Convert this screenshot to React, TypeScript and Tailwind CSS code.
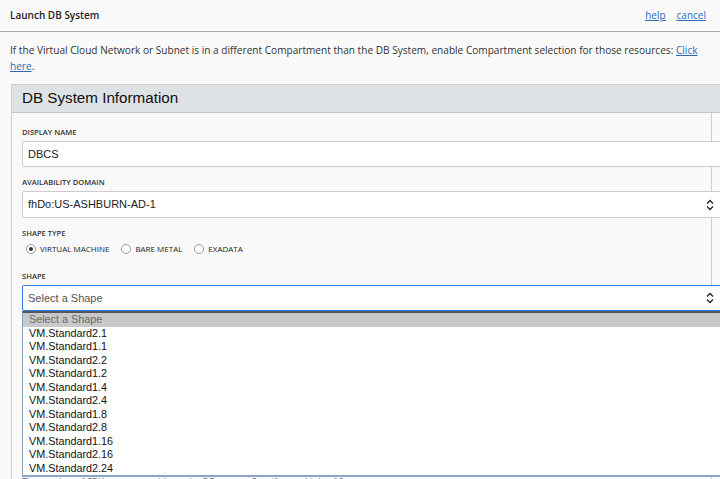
import React from 'react'

const shapes = [
  'VM.Standard2.1',
  'VM.Standard1.1',
  'VM.Standard2.2',
  'VM.Standard1.2',
  'VM.Standard1.4',
  'VM.Standard2.4',
  'VM.Standard1.8',
  'VM.Standard2.8',
  'VM.Standard1.16',
  'VM.Standard2.16',
  'VM.Standard2.24',
]

const ui = { fontFamily: '"Open Sans", "Noto Sans", sans-serif' }
const arial = { fontFamily: '"Liberation Sans", Arial, sans-serif' }

function UpDown() {
  return (
    <svg width="8" height="12" viewBox="0 0 8 12" className="absolute right-[7px] top-1/2 -translate-y-1/2">
      <path d="M1 4.5 L4 1.5 L7 4.5" fill="none" stroke="#222" strokeWidth="1.3" />
      <path d="M1 7.5 L4 10.5 L7 7.5" fill="none" stroke="#222" strokeWidth="1.3" />
    </svg>
  )
}

function Label({ children, className = '' }: { children: React.ReactNode; className?: string }) {
  return (
    <div style={ui} className={`h-[10px] text-[7.6px] leading-[10px] font-semibold text-[#333] uppercase mb-[4px] ${className}`}>
      {children}
    </div>
  )
}

function Radio({ checked, label }: { checked?: boolean; label: string }) {
  return (
    <label className="flex items-center gap-[4px] mr-[12px]">
      <span className="w-[10px] h-[10px] rounded-full border border-[#9a9a9a] bg-white flex items-center justify-center">
        {checked && <span className="w-[4px] h-[4px] rounded-full bg-[#333]" />}
      </span>
      <span style={ui} className="text-[8px] text-[#222] uppercase leading-[12px]">{label}</span>
    </label>
  )
}

export default function App() {
  return (
    <div className="w-[720px] h-[479px] overflow-hidden bg-[#fafafa] relative">
      <div className="h-[32px] border-b border-[#a8a8a8] flex items-center justify-between px-[10px]">
        <span style={ui} className="text-[10px] font-semibold text-[#222]">Launch DB System</span>
        <div style={ui} className="flex gap-[11px] text-[10px] text-[#2b6cb8] underline mr-[4px]">
          <a>help</a>
          <a>cancel</a>
        </div>
      </div>

      <p style={ui} className="mt-[10px] px-[10px] text-[10.1px] leading-[16px] text-[#333] whitespace-nowrap">
        If the Virtual Cloud Network or Subnet is in a different Compartment than the DB System, enable Compartment selection for those resources:{' '}
        <a className="text-[#2b6cb8] underline">Click</a>
        <br />
        <a className="text-[#2b6cb8] underline">here</a>.
      </p>

      <div className="mt-[10px] ml-[11px] w-[720px] border-l border-t border-[#cfcfcf]">
        <div className="h-[28px] bg-[#dfe2e5] border-b border-[#c2c4c6] flex items-center px-[10px]">
          <span style={arial} className="text-[15.2px] text-[#111]">DB System Information</span>
        </div>

        <div className="w-[700px] border-r border-[#cfcfcf] bg-[#f9f9f9] pl-[10px] pt-[14px] pb-[20px]">
          <Label>Display Name</Label>
          <div className="w-[700px] h-[26px] bg-white border border-[#cccccc] rounded-[2px] flex items-center px-[5px]">
            <span style={arial} className="text-[11px] text-[#222]">DBCS</span>
          </div>

          <Label className="mt-[10px]">Availability Domain</Label>
          <div className="relative w-[700px] h-[27px] bg-white border border-[#cccccc] rounded-[2px] flex items-center px-[5px]">
            <span style={arial} className="text-[11px] text-[#222]">fhDo:US-ASHBURN-AD-1</span>
            <UpDown />
          </div>

          <Label className="mt-[10px]">Shape Type</Label>
          <div className="flex items-center mt-[5px] ml-[4px]">
            <Radio checked label="Virtual Machine" />
            <Radio label="Bare Metal" />
            <Radio label="Exadata" />
          </div>

          <Label className="mt-[16px]">Shape</Label>
          <div className="relative w-[700px] h-[26px] bg-white border border-[#2f7de1] rounded-[2px] flex items-center px-[5px]">
            <span style={arial} className="text-[11px] text-[#555]">Select a Shape</span>
            <UpDown />
          </div>

          <p style={ui} className="mt-[165px] text-[9px] leading-[12px] text-[#666]">
            The number of CPU cores to enable on the DB system. Specify a multiple of 2.
          </p>
        </div>
      </div>

      <ul
        style={arial}
        className="absolute left-[22px] top-[311px] w-[700px] bg-white border-t-2 border-t-[#4d5561] border-l border-b-2 border-l-[#8aa0bd] border-b-[#8aa4c8]"
      >
        <li className="h-[13.5px] leading-[13.5px] text-[10.8px] bg-[#c8c8c8] text-[#6b6b6b] pl-[6px]">Select a Shape</li>
        {shapes.map(s => (
          <li key={s} className="h-[13.5px] leading-[13.5px] text-[10.8px] text-[#111] pl-[6px]">
            {s}
          </li>
        ))}
      </ul>
    </div>
  )
}
